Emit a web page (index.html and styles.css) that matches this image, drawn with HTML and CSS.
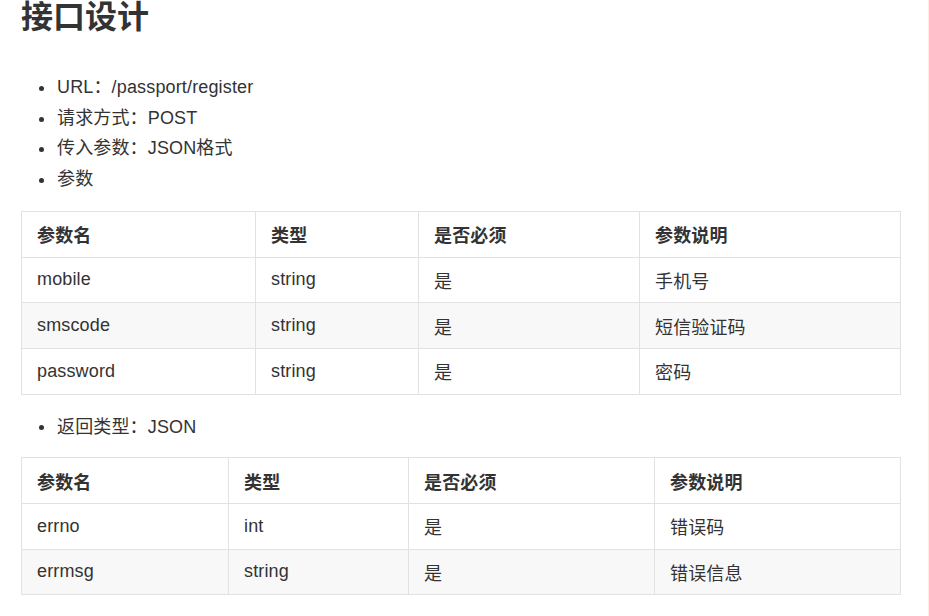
FILE: index.html
```html
<!DOCTYPE html>
<html lang="zh-CN">
<head>
<meta charset="utf-8">
<title>接口设计</title>
<link rel="stylesheet" href="styles.css">
</head>
<body>
<div class="page">
  <h2 class="title">接口设计</h2>
  <ul class="list first">
    <li>URL：/passport/register</li>
    <li>请求方式：POST</li>
    <li>传入参数：JSON格式</li>
    <li>参数</li>
  </ul>
  <table class="tbl t1">
    <colgroup><col class="c1"><col class="c2"><col class="c3"><col class="c4"></colgroup>
    <thead><tr><th>参数名</th><th>类型</th><th>是否必须</th><th>参数说明</th></tr></thead>
    <tbody>
      <tr><td>mobile</td><td>string</td><td>是</td><td>手机号</td></tr>
      <tr><td>smscode</td><td>string</td><td>是</td><td>短信验证码</td></tr>
      <tr><td>password</td><td>string</td><td>是</td><td>密码</td></tr>
    </tbody>
  </table>
  <ul class="list second">
    <li>返回类型：JSON</li>
  </ul>
  <table class="tbl t2">
    <colgroup><col class="c1"><col class="c2"><col class="c3"><col class="c4"></colgroup>
    <thead><tr><th>参数名</th><th>类型</th><th>是否必须</th><th>参数说明</th></tr></thead>
    <tbody>
      <tr><td>errno</td><td>int</td><td>是</td><td>错误码</td></tr>
      <tr><td>errmsg</td><td>string</td><td>是</td><td>错误信息</td></tr>
    </tbody>
  </table>
</div>
</body>
</html>
```
FILE: styles.css
```css
html, body {
  margin: 0;
  padding: 0;
  background: #fff;
}
body {
  font-family: "Liberation Sans", Arial, "Noto Sans CJK SC", sans-serif;
  color: #333;
  font-size: 18px;
}
.page {
  width: 879px;
  padding-left: 21px;
  height: 616px;
  border-right: 1px solid #f9efe4;
  box-sizing: content-box;
  padding-right: 28px;
  overflow: hidden;
}
.title {
  margin: 0;
  font-size: 32px;
  line-height: 34px;
  font-weight: bold;
  color: #333;
}
.list {
  margin: 0;
  padding-left: 18px;
  list-style: none;
}
.list li {
  display: flex;
  align-items: center;
  line-height: 30.7px;
  letter-spacing: 0.15px;
}
.list li::before {
  content: "";
  flex: none;
  width: 5px;
  height: 5px;
  border-radius: 50%;
  background: #333;
  margin-right: 13px;
  margin-top: 2px;
}
.list.first {
  margin-top: 38px;
}
.list.second {
  margin-top: 17px;
}
.tbl {
  width: 879px;
  border-collapse: collapse;
  table-layout: fixed;
}
.t1 { margin-top: 16px; }
.t2 { margin-top: 15px; }
.tbl th, .tbl td {
  border: 1px solid #e2e2e2;
  padding: 0 15px;
  height: 44.7px;
  text-align: left;
  vertical-align: middle;
  letter-spacing: 0.15px;
}
.tbl th {
  font-weight: bold;
  color: #333;
}
.tbl tbody tr:nth-child(even) td {
  background: #f8f8f8;
}
.t1 .c1 { width: 234px; }
.t1 .c2 { width: 163px; }
.t1 .c3 { width: 221px; }
.t1 .c4 { width: 261px; }
.t2 .c1 { width: 207px; }
.t2 .c2 { width: 180px; }
.t2 .c3 { width: 246px; }
.t2 .c4 { width: 246px; }
```
